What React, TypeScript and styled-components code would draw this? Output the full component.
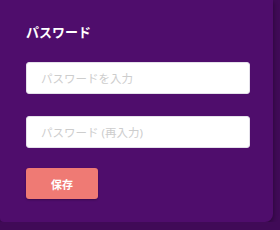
import styled, { createGlobalStyle } from "styled-components";

const GlobalStyle = createGlobalStyle`
  html, body {
    margin: 0;
    padding: 0;
    background-color: #400a57;
  }
  body {
    font-family: "Noto Sans", "Noto Sans CJK JP", sans-serif;
  }
`;

const Card = styled.div`
  box-sizing: border-box;
  width: 273px;
  height: 222px;
  padding: 25px 23px 0 26px;
  background-color: #4f0d6c;
  border-radius: 0 0 8px 4px;
  box-shadow: 1px 2px 4px rgba(0, 0, 0, 0.3);
  display: flex;
  flex-direction: column;
`;

const Title = styled.h2`
  margin: 0 0 22px;
  font-size: 13px;
  font-weight: 700;
  line-height: 15px;
  color: #ffffff;
`;

const Field = styled.input`
  box-sizing: border-box;
  width: 224px;
  height: 32px;
  padding: 0 14px;
  margin-bottom: 22px;
  border: 1px solid #e4e0ea;
  border-radius: 3px;
  background: #ffffff;
  font-family: "Noto Sans", "Noto Sans CJK JP", sans-serif;
  font-size: 11.5px;
  color: #333;
  outline: none;

  &::placeholder {
    color: #cdcdcd;
  }
`;

const SaveButton = styled.button`
  width: 72px;
  height: 31px;
  margin-top: -2px;
  border: none;
  border-radius: 3px;
  background-color: #ef7a74;
  box-shadow: 0 1px 2px rgba(0, 0, 0, 0.3);
  color: #ffffff;
  font-family: "Noto Sans", "Noto Sans CJK JP", sans-serif;
  font-size: 11px;
  font-weight: 700;
  cursor: pointer;
`;

export default function App() {
  return (
    <>
      <GlobalStyle />
      <Card>
        <Title>パスワード</Title>
        <Field type="password" placeholder="パスワードを入力" />
        <Field type="password" placeholder="パスワード (再入力)" />
        <SaveButton>保存</SaveButton>
      </Card>
    </>
  );
}
